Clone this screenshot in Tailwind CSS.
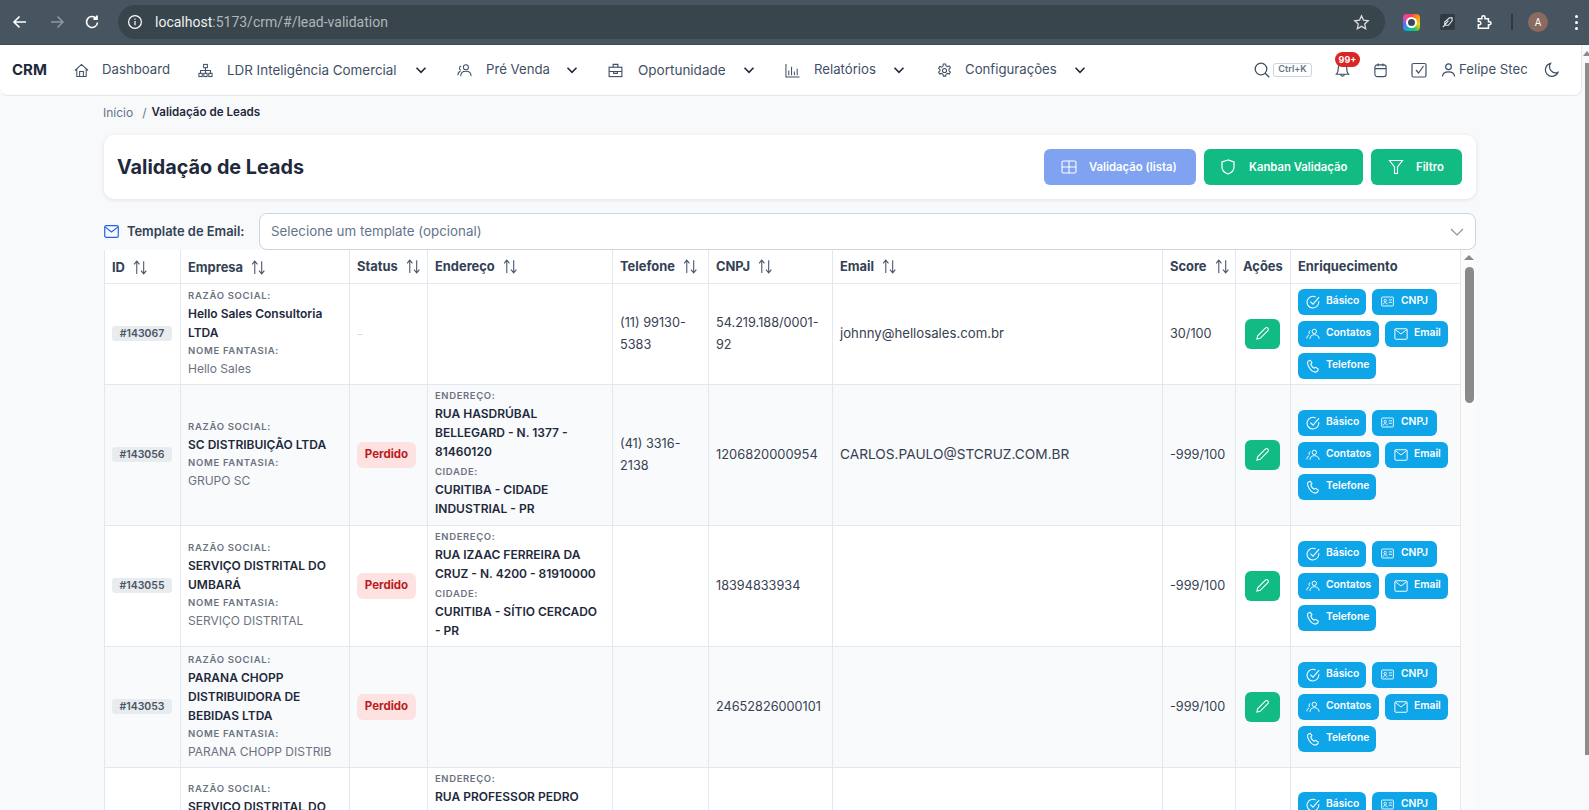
<!DOCTYPE html>
<html lang="pt-BR">
<head>
<meta charset="utf-8">
<title>Validação de Leads</title>
<script src="https://cdn.jsdelivr.net/npm/@tailwindcss/browser@4"></script>
</head>
<body class="m-0">
<div class="relative h-[810px] w-[1589px] overflow-hidden bg-[#f8f9fb] font-['Inter',sans-serif] text-[#334155]">

  <!-- browser chrome -->
  <div class="flex h-[45px] items-center border-b border-[#3d4a52] bg-[#46555f] pl-[11px]">
    <svg class="w-[18px] h-[18px] text-white" viewBox="0 0 18 18" fill="none" stroke="currentColor" stroke-width="1.7"><path d="M15 9H3.500M8.500 3.500 3 9l5.500 5.500"/></svg>
    <svg class="ml-[19px] w-[18px] h-[18px] text-[#8d999f]" viewBox="0 0 18 18" fill="none" stroke="currentColor" stroke-width="1.5"><path d="M3 9h11.500M9.500 3.500 15 9l-5.500 5.500"/></svg>
    <svg class="ml-[17px] w-[18px] h-[18px] text-white" viewBox="0 0 18 18" fill="none" stroke="currentColor" stroke-width="1.7"><path d="M14.500 9.500a5.500 5.500 0 1 1-1.400-4.200"/><path d="M14 2.500v3.600h-3.600" fill="white"/></svg>
    <div class="ml-[17px] flex h-[34px] w-[1267px] items-center rounded-full bg-[#39454c] pl-[9px] pr-[15px]">
      <svg class="w-[16px] h-[16px] text-white" viewBox="0 0 16 16" fill="none" stroke="currentColor" stroke-width="1.2"><circle cx="8" cy="8" r="6.400"/><path d="M8 7v4.200M8 4.400v1.300"/></svg>
      <span class="ml-[12px] font-['Roboto',sans-serif] text-[14px] text-[#aeb6bb]"><span class="text-[#eef0f1]">localhost</span>:5173/crm/#/lead-validation</span>
      <svg class="ml-auto w-[17px] h-[17px] text-[#d8dcde]" viewBox="0 0 18 18" fill="none" stroke="currentColor" stroke-width="1.4"><path d="m9 2 2.100 4.600 5 .6-3.700 3.400 1 5L9 13.100l-4.400 2.500 1-5L1.900 7.200l5-.6z"/></svg>
    </div>
    <div class="ml-[18px] flex h-[17px] w-[17px] items-center justify-center rounded-[4px] bg-[conic-gradient(#f43f5e,#f59e0b,#facc15,#22c55e,#06b6d4,#6366f1,#ec4899,#f43f5e)]"><div class="h-[11px] w-[11px] rounded-full border-2 border-white bg-[#3a4a55]"></div></div>
    <div class="ml-[20px] flex h-[16px] w-[15px] items-center justify-center rounded-[2px] bg-[#2f3c45]">
      <svg class="w-[13px] h-[13px] text-[#dfe6ea]" viewBox="0 0 14 14" fill="none" stroke="currentColor" stroke-width="1.2"><path d="M2 12 8 5M4 10V6.500L9 2h3v3l-4 5z"/></svg>
    </div>
    <svg class="ml-[21px] w-[17px] h-[17px] text-white" viewBox="0 0 18 18" fill="none" stroke="currentColor" stroke-width="1.6"><path d="M2.500 5h3.700V3.600a1.700 1.700 0 0 1 3.400 0V5h3.600v3.300h1.200a1.500 1.500 0 0 1 0 3h-1.200V15H2.500v-3.500h1.300a1.800 1.800 0 0 0 0-3.500H2.500z"/></svg>
    <div class="ml-[18px] h-[16px] w-[2px] bg-[#2f3b42]"></div>
    <div class="ml-[15px] flex h-[20px] w-[20px] items-center justify-center rounded-full bg-[#8c6b5f] font-['Roboto',sans-serif] text-[10px] text-white">A</div>
    <div class="ml-[27px] flex flex-col gap-[3px]"><i class="h-[3px] w-[3px] rounded-full bg-white"></i><i class="h-[3px] w-[3px] rounded-full bg-white"></i><i class="h-[3px] w-[3px] rounded-full bg-white"></i></div>
  </div>

  <!-- nav -->
  <nav class="flex h-[51px] w-[1582px] items-center rounded-b-lg border-b border-r border-[#e2e8f0] bg-white text-[13.2px] text-[#3f4f66]">
    <span class="ml-[12px] w-[34px] text-[15px] font-bold text-[#1e293b]">CRM</span>
    <svg class="ml-[28px] w-[15px] h-[15px]" viewBox="0 0 16 16" fill="none" stroke="currentColor" stroke-width="1.1"><path d="M1 8 8 1.500 15 8M3 6.500V14.500H13V6.500M6 14.500V9H10V14.500"/></svg>
    <span class="ml-[13px] w-[96px]">Dashboard</span>
    <svg class="w-[15px] h-[15px]" viewBox="0 0 16 16" fill="none" stroke="currentColor" stroke-width="1.1"><rect x="6" y="1.500" width="4" height="3.500"/><rect x="1" y="11" width="3.500" height="3.500"/><rect x="6.200" y="11" width="3.500" height="3.500"/><rect x="11.500" y="11" width="3.500" height="3.500"/><path d="M8 5v6M2.700 11V8h10.600v3"/></svg>
    <span class="ml-[14px] w-[188px] text-[13.400px]">LDR Inteligência Comercial</span>
    <svg class="w-[12px] h-[12px]" viewBox="0 0 12 12" fill="none" stroke="#1e293b" stroke-width="1.600"><path d="m1.500 3.800 4.500 4.500 4.500-4.500"/></svg>
    <svg class="ml-[30px] w-[15px] h-[15px]" viewBox="0 0 16 16" fill="none" stroke="currentColor" stroke-width="1.1"><circle cx="9.500" cy="4.500" r="2.700"/><path d="M4 14c0-3.500 2.500-5.200 5.500-5.200S15 10.500 15 14M4.500 3.300a2.400 2.400 0 0 0-.5 4.500M1 13c0-2.500 1-3.800 2.700-4.300"/></svg>
    <span class="ml-[14px] w-[80px]">Pré Venda</span>
    <svg class="w-[12px] h-[12px]" viewBox="0 0 12 12" fill="none" stroke="#1e293b" stroke-width="1.600"><path d="m1.500 3.800 4.500 4.500 4.500-4.500"/></svg>
    <svg class="ml-[30px] w-[15px] h-[15px]" viewBox="0 0 16 16" fill="none" stroke="currentColor" stroke-width="1.200"><rect x="1.200" y="4.500" width="13.600" height="10"/><path d="M5.500 4.500V1.500h5v3M1.200 9h13.600M6 9v2h4V9"/></svg>
    <span class="ml-[15px] w-[105px] text-[13.500px]">Oportunidade</span>
    <svg class="w-[12px] h-[12px]" viewBox="0 0 12 12" fill="none" stroke="#1e293b" stroke-width="1.600"><path d="m1.500 3.800 4.500 4.500 4.500-4.500"/></svg>
    <svg class="ml-[30px] w-[15px] h-[15px]" viewBox="0 0 16 16" fill="none" stroke="currentColor" stroke-width="1.100"><path d="M1 1v14h14.500M4 13V8M7 13V4M10 13V9M13 13V6"/></svg>
    <span class="ml-[14px] w-[79px]">Relatórios</span>
    <svg class="w-[12px] h-[12px]" viewBox="0 0 12 12" fill="none" stroke="#1e293b" stroke-width="1.600"><path d="m1.500 3.800 4.500 4.500 4.500-4.500"/></svg>
    <svg class="ml-[32px] w-[15px] h-[15px]" viewBox="0 0 16 16" fill="none" stroke="currentColor" stroke-width="1.100"><circle cx="8" cy="8" r="2.200"/><path d="M6.800 1h2.400l.4 2 1.600.9 1.900-.7 1.200 2.100-1.500 1.300v1.800l1.500 1.300-1.200 2.100-1.900-.7-1.600.9-.4 2H6.800l-.4-2-1.600-.9-1.900.7-1.200-2.100 1.500-1.300V7.100L1.700 5.800l1.200-2.100 1.900.7 1.600-.9z"/></svg>
    <span class="ml-[13px] w-[109px]">Configurações</span>
    <svg class="w-[12px] h-[12px]" viewBox="0 0 12 12" fill="none" stroke="#1e293b" stroke-width="1.600"><path d="m1.500 3.800 4.500 4.500 4.500-4.500"/></svg>

    <svg class="ml-[168px] w-[16px] h-[16px]" viewBox="0 0 16 16" fill="none" stroke="currentColor" stroke-width="1.300"><circle cx="7" cy="7" r="5.800"/><path d="m11.200 11.200 4 4"/></svg>
    <span class="ml-[3px] flex h-[14px] w-[39px] items-center justify-center rounded-[3px] border border-[#cbd5e1] pb-[2px] text-[9px] font-semibold text-[#64748b]">Ctrl+K</span>
    <div class="relative ml-[23px] h-[16px] w-[15px]">
      <svg class="w-[15px] h-[16px]" viewBox="0 0 16 16" fill="none" stroke="currentColor" stroke-width="1.200"><path d="M8 1a4.500 4.500 0 0 0-4.500 4.500c0 4-1 6-2 7h13c-1-1-2-3-2-7A4.500 4.500 0 0 0 8 1zM6 12.500a2 2 0 0 0 4 0"/></svg>
      <span class="absolute left-[0px] top-[-10px] flex h-[15px] w-[25px] items-center justify-center rounded-full bg-[#dc2626] text-[9px] font-bold text-white">99+</span>
    </div>
    <svg class="ml-[23px] w-[15px] h-[16px]" viewBox="0 0 16 16" fill="none" stroke="currentColor" stroke-width="1.200"><rect x="2" y="2.500" width="12" height="12.500" rx="2.500"/><path d="M2 6.500h12M5.500 1v3M10.500 1v3"/></svg>
    <svg class="ml-[23px] w-[16px] h-[16px]" viewBox="0 0 16 16" fill="none" stroke="currentColor" stroke-width="1.200"><rect x="1" y="1.500" width="14" height="13.500" rx="1.500"/><path d="m5 8 2.500 3L12.500 4"/></svg>
    <svg class="ml-[14px] w-[15px] h-[16px]" viewBox="0 0 16 16" fill="none" stroke="currentColor" stroke-width="1.300"><circle cx="8" cy="4.500" r="3"/><path d="M1.500 15c.3-3.500 3-5 6.500-5s6.200 1.500 6.500 5"/></svg>
    <span class="ml-[3px] w-[85px] text-[#3f4f66]">Felipe Stec</span>
    <svg class="w-[15px] h-[16px]" viewBox="0 0 16 16" fill="none" stroke="currentColor" stroke-width="1.300"><path d="M7 1a7 7 0 1 0 8 9.500A6.500 6.500 0 0 1 7 1z"/></svg>
  </nav>

  <!-- content -->
  <main class="pl-[104px]">
    <div class="flex h-[39px] w-[1372px] items-center pb-[5px] text-[12px] text-[#64748b]">
      <span class="ml-[-1px]">Início</span><span class="ml-[9px]">/</span><span class="ml-[5px] text-[11.6px] font-semibold text-[#1e293b]">Validação de Leads</span>
    </div>

    <div class="flex h-[64px] w-[1372px] items-center rounded-[10px] bg-white pl-[13px] pr-[14px] shadow-[0_1px_4px_rgba(15,23,42,0.10)]">
      <h1 class="pt-[2px] text-[19.8px] leading-none font-bold text-[#1e293b]">Validação de Leads</h1>
      <div class="ml-auto flex gap-[8px] text-[11.300px] font-semibold text-white">
        <div class="flex h-[36px] w-[152px] items-center rounded-[6px] bg-[#7fa3f1] pl-[17px]">
          <svg class="w-[16px] h-[16px]" viewBox="0 0 16 16" fill="none" stroke="currentColor" stroke-width="1.100"><rect x="1" y="2" width="14" height="12" rx="1.500"/><path d="M8 2v12M1 8h14"/></svg>
          <span class="ml-[12px]">Validação (lista)</span>
        </div>
        <div class="flex h-[36px] w-[159px] items-center rounded-[6px] bg-[#12bb83] pl-[16px]">
          <svg class="w-[16px] h-[16px]" viewBox="0 0 16 16" fill="none" stroke="currentColor" stroke-width="1.200"><path d="M8 1 2 3v5c0 3.500 2.500 5.800 6 7 3.500-1.200 6-3.500 6-7V3z"/></svg>
          <span class="ml-[13px]">Kanban Validação</span>
        </div>
        <div class="flex h-[36px] w-[91px] items-center rounded-[6px] bg-[#12bb83] pl-[17px]">
          <svg class="w-[16px] h-[16px]" viewBox="0 0 16 16" fill="none" stroke="currentColor" stroke-width="1.100"><path d="M1.500 1.500h13L9.500 8v6.500h-3V8z"/></svg>
          <span class="ml-[12px]">Filtro</span>
        </div>
      </div>
    </div>

    <div class="mt-[14px] flex h-[37px] w-[1372px] items-center">
      <svg class="w-[15px] h-[13px] text-[#2563eb]" viewBox="0 0 16 14" fill="none" stroke="currentColor" stroke-width="1.300"><rect x="0.700" y="0.700" width="14.600" height="12.600" rx="1.500"/><path d="m1 2 7 5.500L15 2"/></svg>
      <span class="ml-[8px] w-[132px] text-[12.900px] font-semibold text-[#334155]">Template de Email:</span>
      <div class="flex h-[37px] flex-1 items-center rounded-[8px] border border-[#cbd5e1] bg-white pl-[11px] pr-[11px] text-[13.350px] text-[#64748b]">
        Selecione um template (opcional)
        <svg class="ml-auto w-[14px] h-[14px] text-[#8492a6]" viewBox="0 0 14 14" fill="none" stroke="currentColor" stroke-width="1.100"><path d="m1 4 6 6 6-6"/></svg>
      </div>
    </div>

    <div class="flex w-[1372px] rounded-t-[6px] bg-white">
      <table class="w-[1356px] table-fixed border-collapse border-l border-[#e2e8f0] text-[12.700px] text-[#374151]">
        <thead>
          <tr class="h-[33px] border-b border-[#e2e8f0] bg-white text-left text-[12.900px] font-bold text-[#334155]">
            <th class="w-[76px] border-r border-[#e2e8f0] pl-[7px] pt-[2px]"><div class="flex items-center gap-[7px]">ID<svg class="w-[17px] h-[17px] text-[#475569]" viewBox="0 0 16 16" fill="none" stroke="currentColor" stroke-width="1"><path d="M4.500 14V2M2 5l2.500-3L7 5M11 2v12M8.500 11l2.500 3 2.500-3"/></svg></div></th>
            <th class="w-[169px] border-r border-[#e2e8f0] pl-[7px] pt-[2px]"><div class="flex items-center gap-[7px]">Empresa<svg class="w-[17px] h-[17px] text-[#475569]" viewBox="0 0 16 16" fill="none" stroke="currentColor" stroke-width="1"><path d="M4.500 14V2M2 5l2.500-3L7 5M11 2v12M8.500 11l2.500 3 2.500-3"/></svg></div></th>
            <th class="w-[78px] border-r border-[#e2e8f0] pl-[7px]"><div class="flex items-center gap-[7px]">Status<svg class="w-[17px] h-[17px] text-[#475569]" viewBox="0 0 16 16" fill="none" stroke="currentColor" stroke-width="1"><path d="M4.500 14V2M2 5l2.500-3L7 5M11 2v12M8.500 11l2.500 3 2.500-3"/></svg></div></th>
            <th class="w-[185px] border-r border-[#e2e8f0] pl-[7px]"><div class="flex items-center gap-[7px]">Endereço<svg class="w-[17px] h-[17px] text-[#475569]" viewBox="0 0 16 16" fill="none" stroke="currentColor" stroke-width="1"><path d="M4.500 14V2M2 5l2.500-3L7 5M11 2v12M8.500 11l2.500 3 2.500-3"/></svg></div></th>
            <th class="w-[96px] border-r border-[#e2e8f0] pl-[7px]"><div class="flex items-center gap-[7px]">Telefone<svg class="w-[17px] h-[17px] text-[#475569]" viewBox="0 0 16 16" fill="none" stroke="currentColor" stroke-width="1"><path d="M4.500 14V2M2 5l2.500-3L7 5M11 2v12M8.500 11l2.500 3 2.500-3"/></svg></div></th>
            <th class="w-[124px] border-r border-[#e2e8f0] pl-[7px]"><div class="flex items-center gap-[7px]">CNPJ<svg class="w-[17px] h-[17px] text-[#475569]" viewBox="0 0 16 16" fill="none" stroke="currentColor" stroke-width="1"><path d="M4.500 14V2M2 5l2.500-3L7 5M11 2v12M8.500 11l2.500 3 2.500-3"/></svg></div></th>
            <th class="w-[330px] border-r border-[#e2e8f0] pl-[7px]"><div class="flex items-center gap-[7px]">Email<svg class="w-[17px] h-[17px] text-[#475569]" viewBox="0 0 16 16" fill="none" stroke="currentColor" stroke-width="1"><path d="M4.500 14V2M2 5l2.500-3L7 5M11 2v12M8.500 11l2.500 3 2.500-3"/></svg></div></th>
            <th class="w-[73px] border-r border-[#e2e8f0] pl-[7px]"><div class="flex items-center gap-[7px]">Score<svg class="w-[17px] h-[17px] text-[#475569]" viewBox="0 0 16 16" fill="none" stroke="currentColor" stroke-width="1"><path d="M4.500 14V2M2 5l2.500-3L7 5M11 2v12M8.500 11l2.500 3 2.500-3"/></svg></div></th>
            <th class="w-[55px] border-r border-[#e2e8f0] pl-[7px]">Ações</th>
            <th class="w-[170px] border-r border-[#e2e8f0] pl-[7px]">Enriquecimento</th>
          </tr>
        </thead>
        <tbody>
          <!-- row 1 -->
          <tr class="h-[101px] border-b border-[#e2e8f0] bg-white">
            <td class="border-r border-[#e2e8f0] pl-[7px]"><span class="flex h-[15px] w-[60px] items-center justify-center rounded-[3px] bg-[#e9ecef] text-[10.500px] font-semibold text-[#4b5563]">#143067</span></td>
            <td class="border-r border-[#e2e8f0] pl-[7px] pr-[6px]">
              <div class="pb-[2px] text-[9.500px] leading-[13px] font-semibold tracking-[0.7px] text-[#6b7280]">RAZÃO SOCIAL:</div>
              <div class="text-[12px] leading-[19px] font-semibold text-[#1e293b]">Hello Sales Consultoria LTDA</div>
              <div class="mt-[2px] pb-[2px] text-[9.500px] leading-[13px] font-semibold tracking-[0.7px] text-[#6b7280]">NOME FANTASIA:</div>
              <div class="text-[12px] leading-[19px] text-[#6b7280]">Hello Sales</div>
            </td>
            <td class="border-r border-[#e2e8f0] pl-[7px] text-[#cbd5e1]">-</td>
            <td class="border-r border-[#e2e8f0]"></td>
            <td class="border-r border-[#e2e8f0] pl-[7px] pr-[4px] leading-[22px]">(11) 99130-5383</td>
            <td class="border-r border-[#e2e8f0] pl-[7px] leading-[22px]">54.219.188/0001-92</td>
            <td class="border-r border-[#e2e8f0] pl-[7px] text-[13.200px]">johnny@hellosales.com.br</td>
            <td class="border-r border-[#e2e8f0] pl-[7px]">30/100</td>
            <td class="border-r border-[#e2e8f0] pl-[9px]"><span class="flex h-[30px] w-[35px] items-center justify-center rounded-[6px] bg-[#12bb83] text-white"><svg class="w-[15px] h-[15px]" viewBox="0 0 16 16" fill="none" stroke="currentColor" stroke-width="1.100"><path d="M2 14l.8-3.500L11 2.300a1.800 1.800 0 0 1 2.700 2.700L5.500 13.200z"/></svg></span></td>
            <td class="border-r border-[#e2e8f0] pl-[7px] pr-[5px]">
              <div class="flex flex-wrap gap-[6px] text-[10.300px] font-semibold text-white">
                <span class="flex h-[26px] w-[68px] items-center gap-[6px] rounded-[6px] bg-[#0ea5e9] pl-[8px]"><svg class="w-[14px] h-[14px] shrink-0" viewBox="0 0 16 16" fill="none" stroke="currentColor" stroke-width="1.200"><path d="M14.500 7A6.700 6.700 0 1 1 11 2.200M5 7.500l3 3 7-8"/></svg><span class="pb-[2px]">Básico</span></span>
                <span class="flex h-[26px] w-[65px] items-center gap-[7px] rounded-[6px] bg-[#0ea5e9] pl-[9px]"><svg class="w-[13px] h-[13px] shrink-0" viewBox="0 0 16 16" fill="none" stroke="currentColor" stroke-width="1.100"><rect x="0.800" y="2.500" width="14.400" height="11" rx="1"/><circle cx="5.200" cy="6.800" r="1.500"/><path d="M2.700 11.500c.3-1.500 1.200-2 2.500-2s2.200.5 2.500 2M9.500 6h4M9.500 9h4"/></svg><span class="pb-[2px]">CNPJ</span></span>
                <span class="flex h-[26px] w-[81px] items-center gap-[6px] rounded-[6px] bg-[#0ea5e9] pl-[8px]"><svg class="w-[14px] h-[14px] shrink-0" viewBox="0 0 16 16" fill="none" stroke="currentColor" stroke-width="1.100"><circle cx="9.500" cy="5" r="2.500"/><path d="M4.500 13.500c0-3 2-4.700 5-4.700s5.500 1.700 5.500 4.700M5 4a2.200 2.200 0 0 0-.5 4M1 13c0-2.200 1-3.500 2.500-4"/></svg><span class="pb-[2px]">Contatos</span></span>
                <span class="flex h-[26px] w-[63px] items-center gap-[6px] rounded-[6px] bg-[#0ea5e9] pl-[9px]"><svg class="w-[14px] h-[14px] shrink-0" viewBox="0 0 16 16" fill="none" stroke="currentColor" stroke-width="1.100"><rect x="1" y="2" width="14" height="12" rx="1"/><path d="m1.500 3 6.500 5 6.500-5"/></svg><span class="pb-[2px]">Email</span></span>
                <span class="flex h-[26px] w-[78px] items-center gap-[6px] rounded-[6px] bg-[#0ea5e9] pl-[8px]"><svg class="w-[14px] h-[14px] shrink-0" viewBox="0 0 16 16" fill="none" stroke="currentColor" stroke-width="1.200"><path d="M5 1.500 2.500 2.500C1.500 3.500 1.500 6 3.500 9.500s5 5.500 7.500 5.500l2.500-1.500.5-2-3-2-1.500 1c-1.500-.5-3.500-3-4-5l1.300-1.300z"/></svg><span class="pb-[2px]">Telefone</span></span>
              </div>
            </td>
          </tr>
          <!-- row 2 -->
          <tr class="h-[141px] border-b border-[#e2e8f0] bg-[#f8fafc]">
            <td class="border-r border-[#e2e8f0] pl-[7px]"><span class="flex h-[15px] w-[60px] items-center justify-center rounded-[3px] bg-[#e9ecef] text-[10.500px] font-semibold text-[#4b5563]">#143056</span></td>
            <td class="border-r border-[#e2e8f0] pl-[7px] pr-[6px]">
              <div class="pb-[2px] text-[9.500px] leading-[13px] font-semibold tracking-[0.7px] text-[#6b7280]">RAZÃO SOCIAL:</div>
              <div class="text-[12px] leading-[19px] font-semibold text-[#1e293b]">SC DISTRIBUIÇÃO LTDA</div>
              <div class="mt-[2px] pb-[2px] text-[9.500px] leading-[13px] font-semibold tracking-[0.7px] text-[#6b7280]">NOME FANTASIA:</div>
              <div class="text-[12px] leading-[19px] text-[#6b7280]">GRUPO SC</div>
            </td>
            <td class="border-r border-[#e2e8f0] pl-[7px]"><span class="flex h-[26px] w-[59px] items-center justify-center rounded-[6px] bg-[#fee2e2] text-[11.500px] font-bold text-[#b91c1c]">Perdido</span></td>
            <td class="border-r border-[#e2e8f0] pl-[7px] pr-[5px] pb-[2px]">
              <div class="pb-[2px] text-[9.500px] leading-[13px] font-semibold tracking-[0.6px] text-[#6b7280]">ENDEREÇO:</div>
              <div class="text-[12px] leading-[19px] font-semibold text-[#1e293b]">RUA HASDRÚBAL BELLEGARD - N. 1377 - 81460120</div>
              <div class="mt-[4px] pb-[2px] text-[9.500px] leading-[13px] font-semibold tracking-[0.6px] text-[#6b7280]">CIDADE:</div>
              <div class="text-[12px] leading-[19px] font-semibold text-[#1e293b]">CURITIBA - CIDADE INDUSTRIAL - PR</div>
            </td>
            <td class="border-r border-[#e2e8f0] pl-[7px] pr-[4px] leading-[22px]">(41) 3316-2138</td>
            <td class="border-r border-[#e2e8f0] pl-[7px] text-[12.900px]">1206820000954</td>
            <td class="border-r border-[#e2e8f0] pl-[7px] text-[13.700px]">CARLOS.PAULO@STCRUZ.COM.BR</td>
            <td class="border-r border-[#e2e8f0] pl-[7px]">-999/100</td>
            <td class="border-r border-[#e2e8f0] pl-[9px]"><span class="flex h-[30px] w-[35px] items-center justify-center rounded-[6px] bg-[#12bb83] text-white"><svg class="w-[15px] h-[15px]" viewBox="0 0 16 16" fill="none" stroke="currentColor" stroke-width="1.100"><path d="M2 14l.8-3.500L11 2.300a1.800 1.800 0 0 1 2.700 2.700L5.500 13.200z"/></svg></span></td>
            <td class="border-r border-[#e2e8f0] pl-[7px] pr-[5px]">
              <div class="flex flex-wrap gap-[6px] text-[10.300px] font-semibold text-white">
                <span class="flex h-[26px] w-[68px] items-center gap-[6px] rounded-[6px] bg-[#0ea5e9] pl-[8px]"><svg class="w-[14px] h-[14px] shrink-0" viewBox="0 0 16 16" fill="none" stroke="currentColor" stroke-width="1.200"><path d="M14.500 7A6.700 6.700 0 1 1 11 2.200M5 7.500l3 3 7-8"/></svg><span class="pb-[2px]">Básico</span></span>
                <span class="flex h-[26px] w-[65px] items-center gap-[7px] rounded-[6px] bg-[#0ea5e9] pl-[9px]"><svg class="w-[13px] h-[13px] shrink-0" viewBox="0 0 16 16" fill="none" stroke="currentColor" stroke-width="1.100"><rect x="0.800" y="2.500" width="14.400" height="11" rx="1"/><circle cx="5.200" cy="6.800" r="1.500"/><path d="M2.700 11.500c.3-1.500 1.200-2 2.500-2s2.200.5 2.500 2M9.500 6h4M9.500 9h4"/></svg><span class="pb-[2px]">CNPJ</span></span>
                <span class="flex h-[26px] w-[81px] items-center gap-[6px] rounded-[6px] bg-[#0ea5e9] pl-[8px]"><svg class="w-[14px] h-[14px] shrink-0" viewBox="0 0 16 16" fill="none" stroke="currentColor" stroke-width="1.100"><circle cx="9.500" cy="5" r="2.500"/><path d="M4.500 13.500c0-3 2-4.700 5-4.700s5.500 1.700 5.500 4.700M5 4a2.200 2.200 0 0 0-.5 4M1 13c0-2.200 1-3.500 2.500-4"/></svg><span class="pb-[2px]">Contatos</span></span>
                <span class="flex h-[26px] w-[63px] items-center gap-[6px] rounded-[6px] bg-[#0ea5e9] pl-[9px]"><svg class="w-[14px] h-[14px] shrink-0" viewBox="0 0 16 16" fill="none" stroke="currentColor" stroke-width="1.100"><rect x="1" y="2" width="14" height="12" rx="1"/><path d="m1.500 3 6.500 5 6.500-5"/></svg><span class="pb-[2px]">Email</span></span>
                <span class="flex h-[26px] w-[78px] items-center gap-[6px] rounded-[6px] bg-[#0ea5e9] pl-[8px]"><svg class="w-[14px] h-[14px] shrink-0" viewBox="0 0 16 16" fill="none" stroke="currentColor" stroke-width="1.200"><path d="M5 1.500 2.500 2.500C1.500 3.500 1.500 6 3.500 9.500s5 5.500 7.500 5.500l2.500-1.500.5-2-3-2-1.500 1c-1.500-.5-3.500-3-4-5l1.300-1.300z"/></svg><span class="pb-[2px]">Telefone</span></span>
              </div>
            </td>
          </tr>
          <!-- row 3 -->
          <tr class="h-[121px] border-b border-[#e2e8f0] bg-white">
            <td class="border-r border-[#e2e8f0] pl-[7px]"><span class="flex h-[15px] w-[60px] items-center justify-center rounded-[3px] bg-[#e9ecef] text-[10.500px] font-semibold text-[#4b5563]">#143055</span></td>
            <td class="border-r border-[#e2e8f0] pl-[7px] pr-[6px]">
              <div class="pb-[2px] text-[9.500px] leading-[13px] font-semibold tracking-[0.7px] text-[#6b7280]">RAZÃO SOCIAL:</div>
              <div class="text-[12px] leading-[19px] font-semibold text-[#1e293b]">SERVIÇO DISTRITAL DO UMBARÁ</div>
              <div class="mt-[2px] pb-[2px] text-[9.500px] leading-[13px] font-semibold tracking-[0.7px] text-[#6b7280]">NOME FANTASIA:</div>
              <div class="text-[12px] leading-[19px] text-[#6b7280]">SERVIÇO DISTRITAL</div>
            </td>
            <td class="border-r border-[#e2e8f0] pl-[7px]"><span class="flex h-[26px] w-[59px] items-center justify-center rounded-[6px] bg-[#fee2e2] text-[11.500px] font-bold text-[#b91c1c]">Perdido</span></td>
            <td class="border-r border-[#e2e8f0] pl-[7px] pr-[5px] pb-[2px]">
              <div class="pb-[2px] text-[9.500px] leading-[13px] font-semibold tracking-[0.6px] text-[#6b7280]">ENDEREÇO:</div>
              <div class="text-[12px] leading-[19px] font-semibold text-[#1e293b]">RUA IZAAC FERREIRA DA CRUZ - N. 4200 - 81910000</div>
              <div class="mt-[4px] pb-[2px] text-[9.500px] leading-[13px] font-semibold tracking-[0.6px] text-[#6b7280]">CIDADE:</div>
              <div class="text-[12px] leading-[19px] font-semibold text-[#1e293b]">CURITIBA - SÍTIO CERCADO <span class="whitespace-nowrap">- PR</span></div>
            </td>
            <td class="border-r border-[#e2e8f0]"></td>
            <td class="border-r border-[#e2e8f0] pl-[7px]">18394833934</td>
            <td class="border-r border-[#e2e8f0]"></td>
            <td class="border-r border-[#e2e8f0] pl-[7px]">-999/100</td>
            <td class="border-r border-[#e2e8f0] pl-[9px]"><span class="flex h-[30px] w-[35px] items-center justify-center rounded-[6px] bg-[#12bb83] text-white"><svg class="w-[15px] h-[15px]" viewBox="0 0 16 16" fill="none" stroke="currentColor" stroke-width="1.100"><path d="M2 14l.8-3.500L11 2.300a1.800 1.800 0 0 1 2.700 2.700L5.500 13.200z"/></svg></span></td>
            <td class="border-r border-[#e2e8f0] pl-[7px] pr-[5px]">
              <div class="flex flex-wrap gap-[6px] text-[10.300px] font-semibold text-white">
                <span class="flex h-[26px] w-[68px] items-center gap-[6px] rounded-[6px] bg-[#0ea5e9] pl-[8px]"><svg class="w-[14px] h-[14px] shrink-0" viewBox="0 0 16 16" fill="none" stroke="currentColor" stroke-width="1.200"><path d="M14.500 7A6.700 6.700 0 1 1 11 2.200M5 7.500l3 3 7-8"/></svg><span class="pb-[2px]">Básico</span></span>
                <span class="flex h-[26px] w-[65px] items-center gap-[7px] rounded-[6px] bg-[#0ea5e9] pl-[9px]"><svg class="w-[13px] h-[13px] shrink-0" viewBox="0 0 16 16" fill="none" stroke="currentColor" stroke-width="1.100"><rect x="0.800" y="2.500" width="14.400" height="11" rx="1"/><circle cx="5.200" cy="6.800" r="1.500"/><path d="M2.700 11.500c.3-1.500 1.200-2 2.500-2s2.200.5 2.500 2M9.500 6h4M9.500 9h4"/></svg><span class="pb-[2px]">CNPJ</span></span>
                <span class="flex h-[26px] w-[81px] items-center gap-[6px] rounded-[6px] bg-[#0ea5e9] pl-[8px]"><svg class="w-[14px] h-[14px] shrink-0" viewBox="0 0 16 16" fill="none" stroke="currentColor" stroke-width="1.100"><circle cx="9.500" cy="5" r="2.500"/><path d="M4.500 13.500c0-3 2-4.700 5-4.700s5.500 1.700 5.500 4.700M5 4a2.200 2.200 0 0 0-.5 4M1 13c0-2.200 1-3.500 2.500-4"/></svg><span class="pb-[2px]">Contatos</span></span>
                <span class="flex h-[26px] w-[63px] items-center gap-[6px] rounded-[6px] bg-[#0ea5e9] pl-[9px]"><svg class="w-[14px] h-[14px] shrink-0" viewBox="0 0 16 16" fill="none" stroke="currentColor" stroke-width="1.100"><rect x="1" y="2" width="14" height="12" rx="1"/><path d="m1.500 3 6.500 5 6.500-5"/></svg><span class="pb-[2px]">Email</span></span>
                <span class="flex h-[26px] w-[78px] items-center gap-[6px] rounded-[6px] bg-[#0ea5e9] pl-[8px]"><svg class="w-[14px] h-[14px] shrink-0" viewBox="0 0 16 16" fill="none" stroke="currentColor" stroke-width="1.200"><path d="M5 1.500 2.500 2.500C1.500 3.500 1.500 6 3.500 9.500s5 5.500 7.500 5.500l2.500-1.500.5-2-3-2-1.500 1c-1.500-.5-3.500-3-4-5l1.300-1.300z"/></svg><span class="pb-[2px]">Telefone</span></span>
              </div>
            </td>
          </tr>
          <!-- row 4 -->
          <tr class="h-[121px] border-b border-[#e2e8f0] bg-[#f8fafc]">
            <td class="border-r border-[#e2e8f0] pl-[7px]"><span class="flex h-[15px] w-[60px] items-center justify-center rounded-[3px] bg-[#e9ecef] text-[10.500px] font-semibold text-[#4b5563]">#143053</span></td>
            <td class="border-r border-[#e2e8f0] pl-[7px] pr-[6px]">
              <div class="pb-[2px] text-[9.500px] leading-[13px] font-semibold tracking-[0.7px] text-[#6b7280]">RAZÃO SOCIAL:</div>
              <div class="text-[12px] leading-[19px] font-semibold text-[#1e293b]">PARANA CHOPP DISTRIBUIDORA DE BEBIDAS LTDA</div>
              <div class="mt-[2px] pb-[2px] text-[9.500px] leading-[13px] font-semibold tracking-[0.7px] text-[#6b7280]">NOME FANTASIA:</div>
              <div class="text-[12px] leading-[19px] text-[#6b7280]">PARANA CHOPP DISTRIB</div>
            </td>
            <td class="border-r border-[#e2e8f0] pl-[7px]"><span class="flex h-[26px] w-[59px] items-center justify-center rounded-[6px] bg-[#fee2e2] text-[11.500px] font-bold text-[#b91c1c]">Perdido</span></td>
            <td class="border-r border-[#e2e8f0]"></td>
            <td class="border-r border-[#e2e8f0]"></td>
            <td class="border-r border-[#e2e8f0] pl-[7px]">24652826000101</td>
            <td class="border-r border-[#e2e8f0]"></td>
            <td class="border-r border-[#e2e8f0] pl-[7px]">-999/100</td>
            <td class="border-r border-[#e2e8f0] pl-[9px]"><span class="flex h-[30px] w-[35px] items-center justify-center rounded-[6px] bg-[#12bb83] text-white"><svg class="w-[15px] h-[15px]" viewBox="0 0 16 16" fill="none" stroke="currentColor" stroke-width="1.100"><path d="M2 14l.8-3.500L11 2.300a1.800 1.800 0 0 1 2.700 2.700L5.500 13.200z"/></svg></span></td>
            <td class="border-r border-[#e2e8f0] pl-[7px] pr-[5px]">
              <div class="flex flex-wrap gap-[6px] text-[10.300px] font-semibold text-white">
                <span class="flex h-[26px] w-[68px] items-center gap-[6px] rounded-[6px] bg-[#0ea5e9] pl-[8px]"><svg class="w-[14px] h-[14px] shrink-0" viewBox="0 0 16 16" fill="none" stroke="currentColor" stroke-width="1.200"><path d="M14.500 7A6.700 6.700 0 1 1 11 2.200M5 7.500l3 3 7-8"/></svg><span class="pb-[2px]">Básico</span></span>
                <span class="flex h-[26px] w-[65px] items-center gap-[7px] rounded-[6px] bg-[#0ea5e9] pl-[9px]"><svg class="w-[13px] h-[13px] shrink-0" viewBox="0 0 16 16" fill="none" stroke="currentColor" stroke-width="1.100"><rect x="0.800" y="2.500" width="14.400" height="11" rx="1"/><circle cx="5.200" cy="6.800" r="1.500"/><path d="M2.700 11.500c.3-1.500 1.200-2 2.500-2s2.200.5 2.500 2M9.500 6h4M9.500 9h4"/></svg><span class="pb-[2px]">CNPJ</span></span>
                <span class="flex h-[26px] w-[81px] items-center gap-[6px] rounded-[6px] bg-[#0ea5e9] pl-[8px]"><svg class="w-[14px] h-[14px] shrink-0" viewBox="0 0 16 16" fill="none" stroke="currentColor" stroke-width="1.100"><circle cx="9.500" cy="5" r="2.500"/><path d="M4.500 13.500c0-3 2-4.700 5-4.700s5.500 1.700 5.500 4.700M5 4a2.200 2.200 0 0 0-.5 4M1 13c0-2.200 1-3.500 2.500-4"/></svg><span class="pb-[2px]">Contatos</span></span>
                <span class="flex h-[26px] w-[63px] items-center gap-[6px] rounded-[6px] bg-[#0ea5e9] pl-[9px]"><svg class="w-[14px] h-[14px] shrink-0" viewBox="0 0 16 16" fill="none" stroke="currentColor" stroke-width="1.100"><rect x="1" y="2" width="14" height="12" rx="1"/><path d="m1.500 3 6.500 5 6.500-5"/></svg><span class="pb-[2px]">Email</span></span>
                <span class="flex h-[26px] w-[78px] items-center gap-[6px] rounded-[6px] bg-[#0ea5e9] pl-[8px]"><svg class="w-[14px] h-[14px] shrink-0" viewBox="0 0 16 16" fill="none" stroke="currentColor" stroke-width="1.200"><path d="M5 1.500 2.500 2.500C1.500 3.500 1.500 6 3.500 9.500s5 5.500 7.500 5.500l2.500-1.500.5-2-3-2-1.500 1c-1.500-.5-3.500-3-4-5l1.300-1.300z"/></svg><span class="pb-[2px]">Telefone</span></span>
              </div>
            </td>
          </tr>
          <!-- row 5, cut by the window -->
          <tr class="h-[139px] border-b border-[#e2e8f0] bg-white">
            <td class="border-r border-[#e2e8f0]"></td>
            <td class="border-r border-[#e2e8f0] pl-[7px] pr-[6px] pt-[14px] align-top">
              <div class="pb-[2px] text-[9.500px] leading-[13px] font-semibold tracking-[0.7px] text-[#6b7280]">RAZÃO SOCIAL:</div>
              <div class="text-[12px] leading-[19px] font-semibold text-[#1e293b]">SERVIÇO DISTRITAL DO</div>
            </td>
            <td class="border-r border-[#e2e8f0]"></td>
            <td class="border-r border-[#e2e8f0] pl-[7px] pr-[5px] pt-[4px] align-top">
              <div class="pb-[2px] text-[9.500px] leading-[13px] font-semibold tracking-[0.6px] text-[#6b7280]">ENDEREÇO:</div>
              <div class="text-[12px] leading-[19px] font-semibold text-[#1e293b]">RUA PROFESSOR PEDRO</div>
            </td>
            <td class="border-r border-[#e2e8f0]"></td>
            <td class="border-r border-[#e2e8f0]"></td>
            <td class="border-r border-[#e2e8f0]"></td>
            <td class="border-r border-[#e2e8f0]"></td>
            <td class="border-r border-[#e2e8f0]"></td>
            <td class="border-r border-[#e2e8f0] pl-[7px] pr-[5px] pt-[24px] align-top">
              <div class="flex flex-wrap gap-[6px] text-[10.300px] font-semibold text-white">
                <span class="flex h-[26px] w-[68px] items-center gap-[6px] rounded-[6px] bg-[#0ea5e9] pl-[8px]"><svg class="w-[14px] h-[14px] shrink-0" viewBox="0 0 16 16" fill="none" stroke="currentColor" stroke-width="1.200"><path d="M14.500 7A6.700 6.700 0 1 1 11 2.200M5 7.500l3 3 7-8"/></svg><span class="pb-[2px]">Básico</span></span>
                <span class="flex h-[26px] w-[65px] items-center gap-[7px] rounded-[6px] bg-[#0ea5e9] pl-[9px]"><svg class="w-[13px] h-[13px] shrink-0" viewBox="0 0 16 16" fill="none" stroke="currentColor" stroke-width="1.100"><rect x="0.800" y="2.500" width="14.400" height="11" rx="1"/><circle cx="5.200" cy="6.800" r="1.500"/><path d="M2.700 11.500c.3-1.500 1.200-2 2.500-2s2.200.5 2.500 2M9.500 6h4M9.500 9h4"/></svg><span class="pb-[2px]">CNPJ</span></span>
              </div>
            </td>
          </tr>
        </tbody>
      </table>
      <!-- inner scrollbar -->
      <div class="relative w-[16px] self-stretch rounded-tr-[6px] bg-[#fbfbfc]">
        <div class="absolute left-[3px] top-[5px] h-0 w-0 border-x-[5px] border-b-[5px] border-x-transparent border-b-[#8a8a8a]"></div>
        <div class="absolute left-[4px] top-[17px] h-[136px] w-[9px] rounded-full bg-[#8a8a8a]"></div>
      </div>
    </div>
  </main>

  <!-- window scrollbar -->
  <div class="absolute right-0 top-[45px] h-[765px] w-[7px] bg-[#f8f9fb]">
    <div class="absolute left-[1px] top-[6px] h-0 w-0 border-x-[4px] border-b-[5px] border-x-transparent border-b-[#8a8a8a]"></div>
    <div class="absolute left-[3px] top-[18px] h-[692px] w-[4px] bg-[#8d8d8d]"></div>
  </div>
</div>
</body>
</html>
